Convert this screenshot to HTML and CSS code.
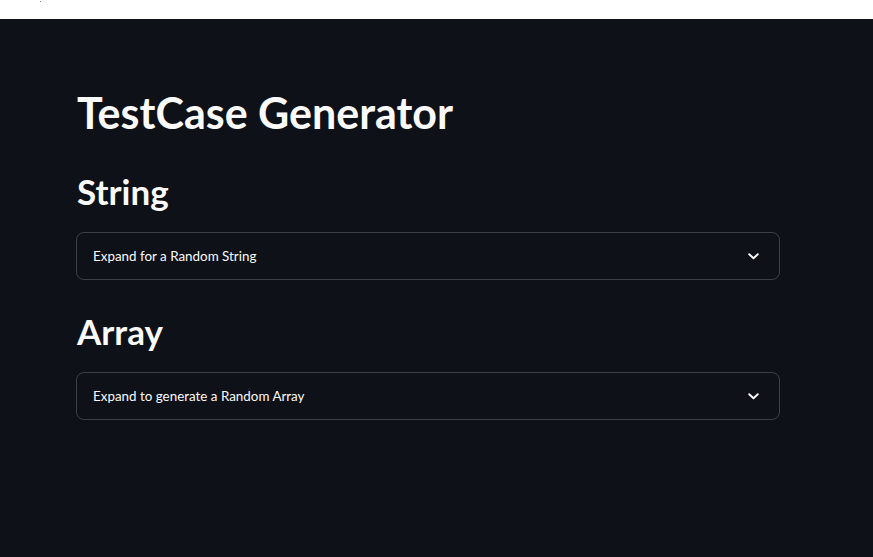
FILE: index.html
```html
<!DOCTYPE html>
<html lang="en">
<head>
<meta charset="utf-8">
<title>TestCase Generator</title>
<link rel="stylesheet" href="styles.css">
</head>
<body>
<div class="topbar"><span class="dot"></span></div>
<main class="app">
  <h1 class="title">TestCase Generator</h1>
  <h2 class="section">String</h2>
  <div class="expander">
    <span class="label">Expand for a Random String</span>
    <svg class="chev" width="11" height="7" viewBox="0 0 11 7"><path d="M1.2 1.2 L5.5 5.3 L9.8 1.2" fill="none" stroke="#fafafa" stroke-width="1.9" stroke-linecap="round" stroke-linejoin="round"/></svg>
  </div>
  <h2 class="section">Array</h2>
  <div class="expander">
    <span class="label">Expand to generate a Random Array</span>
    <svg class="chev" width="11" height="7" viewBox="0 0 11 7"><path d="M1.2 1.2 L5.5 5.3 L9.8 1.2" fill="none" stroke="#fafafa" stroke-width="1.9" stroke-linecap="round" stroke-linejoin="round"/></svg>
  </div>
</main>
</body>
</html>
```
FILE: styles.css
```css
html, body {
  margin: 0;
  padding: 0;
  height: 100%;
}
body {
  background: #0e1117;
  color: #fafafa;
  font-family: Lato, "Noto Sans", sans-serif;
  display: flex;
  flex-direction: column;
}
.topbar {
  height: 19px;
  background: #ffffff;
  flex-shrink: 0;
  position: relative;
}
.dot {
  position: absolute;
  left: 40px;
  top: 1px;
  width: 1px;
  height: 1px;
  background: #777;
}
.app {
  flex: 1;
  padding: 68px 0 0 76px;
  width: 704px;
}
.title {
  margin: 0;
  font-size: 43px;
  font-weight: 700;
  line-height: 52px;
  padding: 0 0 0 1px;
}
.section {
  margin: 31px 0 0 0;
  font-size: 35px;
  font-weight: 700;
  line-height: 42px;
  padding: 0 0 0 1px;
}
.section + .expander {
  margin-top: 20px;
}
.expander + .section {
  margin-top: 30px;
}
.expander {
  box-sizing: border-box;
  height: 48px;
  border: 1px solid rgba(250, 250, 250, 0.2);
  border-radius: 8px;
  display: flex;
  align-items: center;
  justify-content: space-between;
  padding: 0 20px 0 16px;
}
.label {
  font-size: 13.4px;
  line-height: 20px;
}
.chev {
  display: block;
  margin-top: 1px;
}
```
